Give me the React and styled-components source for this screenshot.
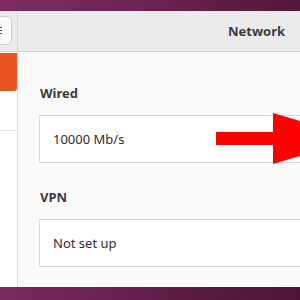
import React from "react";
import styled, { createGlobalStyle } from "styled-components";

const GlobalStyle = createGlobalStyle`
  html, body {
    margin: 0;
    padding: 0;
    width: 300px;
    height: 300px;
    overflow: hidden;
    background: linear-gradient(100deg, #7c2c60 0%, #6e2452 40%, #5a1b42 70%, #4b1536 100%);
    font-family: "Noto Sans", "Liberation Sans", sans-serif;
  }
`;

// ! Window
const Window = styled.div`
  margin-top: 11px;
  width: 300px;
  height: 276px;
  overflow: hidden;
  display: flex;
  background: #fafafa;
`;

// ! Sidebar
const Sidebar = styled.aside`
  width: 18px;
  flex-shrink: 0;
  display: flex;
  flex-direction: column;
  background: #ffffff;
  border-right: 1px solid #d6d6d6;
  box-sizing: border-box;
`;

const SideHeader = styled.div`
  height: 41px;
  box-sizing: border-box;
  padding-top: 5px;
  background: #ebebeb;
  border-bottom: 1px solid #d3d3d3;
`;

const MenuButton = styled.div`
  width: 12px;
  height: 29px;
  box-sizing: border-box;
  background: #fafafa;
  border: 1px solid #cdcdcd;
  border-left: none;
  border-radius: 0 5px 5px 0;
  display: flex;
  flex-direction: column;
  justify-content: center;
  gap: 2px;
`;

const MenuLine = styled.span`
  display: block;
  width: 2px;
  height: 1px;
  background: #4a4a4a;
`;

const SideRow = styled.div`
  height: ${p => (p.active ? "38px" : "39px")};
  background: ${p => (p.active ? "#e95420" : "#ffffff")};
  border-radius: ${p => (p.active ? "0 0 3px 0" : "0")};
  border-bottom: ${p => (p.active ? "none" : "1px solid #e2e2e2")};
  margin-top: ${p => (p.active ? "1px" : "0")};
`;

// ! Main
const Main = styled.main`
  flex: 1;
  min-width: 0;
  display: flex;
  flex-direction: column;
`;

const HeaderBar = styled.header`
  height: 41px;
  box-sizing: border-box;
  background: #ebebeb;
  border-bottom: 1px solid #d3d3d3;
  display: flex;
  align-items: center;
  padding-left: 210px;
`;

const Title = styled.h1`
  margin: 0;
  font-size: 13px;
  font-weight: 700;
  color: #3c3c3c;
  white-space: nowrap;
`;

const Content = styled.div`
  padding: 33px 0 0 21px;
  display: flex;
  flex-direction: column;
`;

const SectionLabel = styled.h2`
  margin: 0 0 ${p => p.gap}px 1px;
  font-size: 13px;
  font-weight: 700;
  color: #3a3a3a;
  line-height: 16px;
`;

const Card = styled.div`
  height: 48px;
  box-sizing: border-box;
  background: #ffffff;
  border: 1px solid #d9d9d9;
  border-right: none;
  display: flex;
  align-items: center;
  padding-left: 13px;
  margin-bottom: ${p => p.after}px;
  font-size: 13px;
  color: #2e2e2e;
`;

// ! Arrow overlay
const ArrowWrap = styled.svg`
  position: absolute;
  left: 214px;
  top: 112px;
`;

const RedArrow = () => (
  <ArrowWrap width="86" height="54" viewBox="0 0 86 54">
    <rect x="2" y="20" width="58" height="13" fill="#ff0000" />
    <polygon points="59,1 145,26.5 59,52" fill="#ff0000" />
  </ArrowWrap>
);

export default function App() {
  return (
    <>
      <GlobalStyle />
      <Window>
        <Sidebar>
          <SideHeader>
            <MenuButton>
              <MenuLine />
              <MenuLine />
              <MenuLine />
            </MenuButton>
          </SideHeader>
          <SideRow active />
          <SideRow />
        </Sidebar>
        <Main>
          <HeaderBar>
            <Title>Network</Title>
          </HeaderBar>
          <Content>
            <SectionLabel gap={14}>Wired</SectionLabel>
            <Card after={26}>10000 Mb/s</Card>
            <SectionLabel gap={14}>VPN</SectionLabel>
            <Card after={0}>Not set up</Card>
          </Content>
        </Main>
      </Window>
      <RedArrow />
    </>
  );
}
